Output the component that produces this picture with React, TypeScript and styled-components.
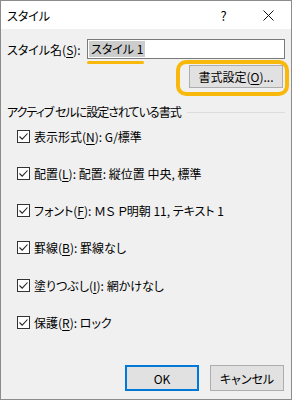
import styled, { createGlobalStyle } from "styled-components";

const GlobalStyle = createGlobalStyle`
    html, body {
        margin: 0;
        padding: 0;
        background: #ffffff;
    }
    body {
        font-family: "Noto Sans CJK JP", "DejaVu Sans", sans-serif;
        font-size: 12px;
        color: #000;
        font-feature-settings: "palt";
    }
`;

const Window = styled.div`
    width: 292px;
    height: 400px;
    box-sizing: border-box;
    border: 1px solid #8c8c8c;
    display: flex;
    flex-direction: column;
    background: #f0f0f0;
`;

const TitleBar = styled.div`
    height: 28px;
    flex: none;
    background: #ffffff;
    display: flex;
    align-items: center;
    padding-left: 6px;
    font-size: 12px;
`;

const Title = styled.span`
    flex: 1;
`;

const TitleButton = styled.span`
    width: 45px;
    height: 28px;
    display: flex;
    align-items: center;
    justify-content: center;
    font-size: 13px;
`;

const Body = styled.div`
    flex: 1;
    display: flex;
    flex-direction: column;
    padding: 10px 6px 8px 6px;
`;

const NameRow = styled.div`
    display: flex;
    align-items: center;
    height: 20px;
`;

const NameLabel = styled.span`
    width: 80px;
`;

const NameInput = styled.div`
    position: relative;
    box-sizing: border-box;
    width: 198px;
    height: 20px;
    border: 1px solid #7a7a7a;
    background: #fff;
    display: flex;
    align-items: center;
    padding-left: 1px;
`;

const Selected = styled.span`
    background: #cccccc;
    padding: 0 2px;
    line-height: 16px;
`;

const Marker = styled.span`
    position: absolute;
    left: -1px;
    top: 21px;
    width: 57px;
    height: 3px;
    border-radius: 2px;
    background: #f8b90c;
`;

const FormatRow = styled.div`
    display: flex;
    justify-content: flex-end;
    margin-top: 6px;
    padding-right: 2px;
`;

const Highlight = styled.div`
    position: relative;
`;

const Ring = styled.span`
    position: absolute;
    left: -13px;
    top: -5px;
    right: -6px;
    bottom: -8px;
    border: 4px solid #f8b90c;
    border-radius: 10px;
`;

const Button = styled.button<{ $primary?: boolean }>`
    box-sizing: border-box;
    width: 74px;
    height: 26px;
    border: ${({ $primary }) => ($primary ? "2px solid #0078d7" : "1px solid #adadad")};
    background: #e1e1e1;
    font-family: inherit;
    font-feature-settings: "palt";
    font-size: 12px;
    color: #000;
    padding: 0;
`;

const FormatButton = styled(Button)`
    width: 94px;
    height: 23px;
`;

const GroupHeader = styled.div`
    display: flex;
    align-items: center;
    margin-top: 16px;
    line-height: 16px;
    gap: 6px;
`;

const GroupTitle = styled.span`
    letter-spacing: -1px;
`;

const GroupLine = styled.span`
    flex: 1;
    height: 1px;
    background: #dcdcdc;
`;

const Rows = styled.div`
    display: flex;
    flex-direction: column;
    gap: 21.3px;
    margin-top: 8px;
    padding-left: 10px;
`;

const Row = styled.label`
    display: flex;
    align-items: center;
    height: 16px;
    gap: 4px;
`;

const Box = styled.span`
    box-sizing: border-box;
    width: 13px;
    height: 13px;
    border: 1px solid #333;
    background: #fff;
    display: flex;
    align-items: center;
    justify-content: center;
`;

const Key = styled.span`
    text-decoration: underline;
    text-underline-offset: 2px;
`;

const Footer = styled.div`
    margin-top: auto;
    display: flex;
    justify-content: flex-end;
    gap: 11px;
    padding-right: 1px;
`;

const Check = () => (
    <Box>
        <svg width="11" height="11" viewBox="0 0 11 11">
            <path d="M1.5 5.5 L4.2 8.2 L9.5 2.5" fill="none" stroke="#222" strokeWidth="1.1" />
        </svg>
    </Box>
);

const items = [
    { name: "表示形式", key: "N", value: "G/標準" },
    { name: "配置", key: "L", value: "配置: 縦位置 中央, 標準" },
    { name: "フォント", key: "F", value: "ＭＳ Ｐ明朝 11, テキスト 1" },
    { name: "罫線", key: "B", value: "罫線なし" },
    { name: "塗りつぶし", key: "I", value: "網かけなし" },
    { name: "保護", key: "R", value: "ロック" },
];

const App = () => {
    return (
        <>
            <GlobalStyle />
            <Window>
                <TitleBar>
                    <Title>スタイル</Title>
                    <TitleButton>?</TitleButton>
                    <TitleButton>
                        <svg width="11" height="11" viewBox="0 0 11 11">
                            <path d="M0.5 0.5 L10.5 10.5 M10.5 0.5 L0.5 10.5" stroke="#111" strokeWidth="1" />
                        </svg>
                    </TitleButton>
                </TitleBar>
                <Body>
                    <NameRow>
                        <NameLabel>
                            スタイル名(<Key>S</Key>):
                        </NameLabel>
                        <NameInput>
                            <Selected>スタイル 1</Selected>
                            <Marker />
                        </NameInput>
                    </NameRow>
                    <FormatRow>
                        <Highlight>
                            <FormatButton>
                                書式設定(<Key>O</Key>)...
                            </FormatButton>
                            <Ring />
                        </Highlight>
                    </FormatRow>
                    <GroupHeader>
                        <GroupTitle>アクティブ セルに設定されている書式</GroupTitle>
                        <GroupLine />
                    </GroupHeader>
                    <Rows>
                        {items.map((it) => (
                            <Row key={it.key}>
                                <Check />
                                <span>
                                    {it.name}(<Key>{it.key}</Key>): {it.value}
                                </span>
                            </Row>
                        ))}
                    </Rows>
                    <Footer>
                        <Button $primary>OK</Button>
                        <Button>キャンセル</Button>
                    </Footer>
                </Body>
            </Window>
        </>
    );
};

export default App;
